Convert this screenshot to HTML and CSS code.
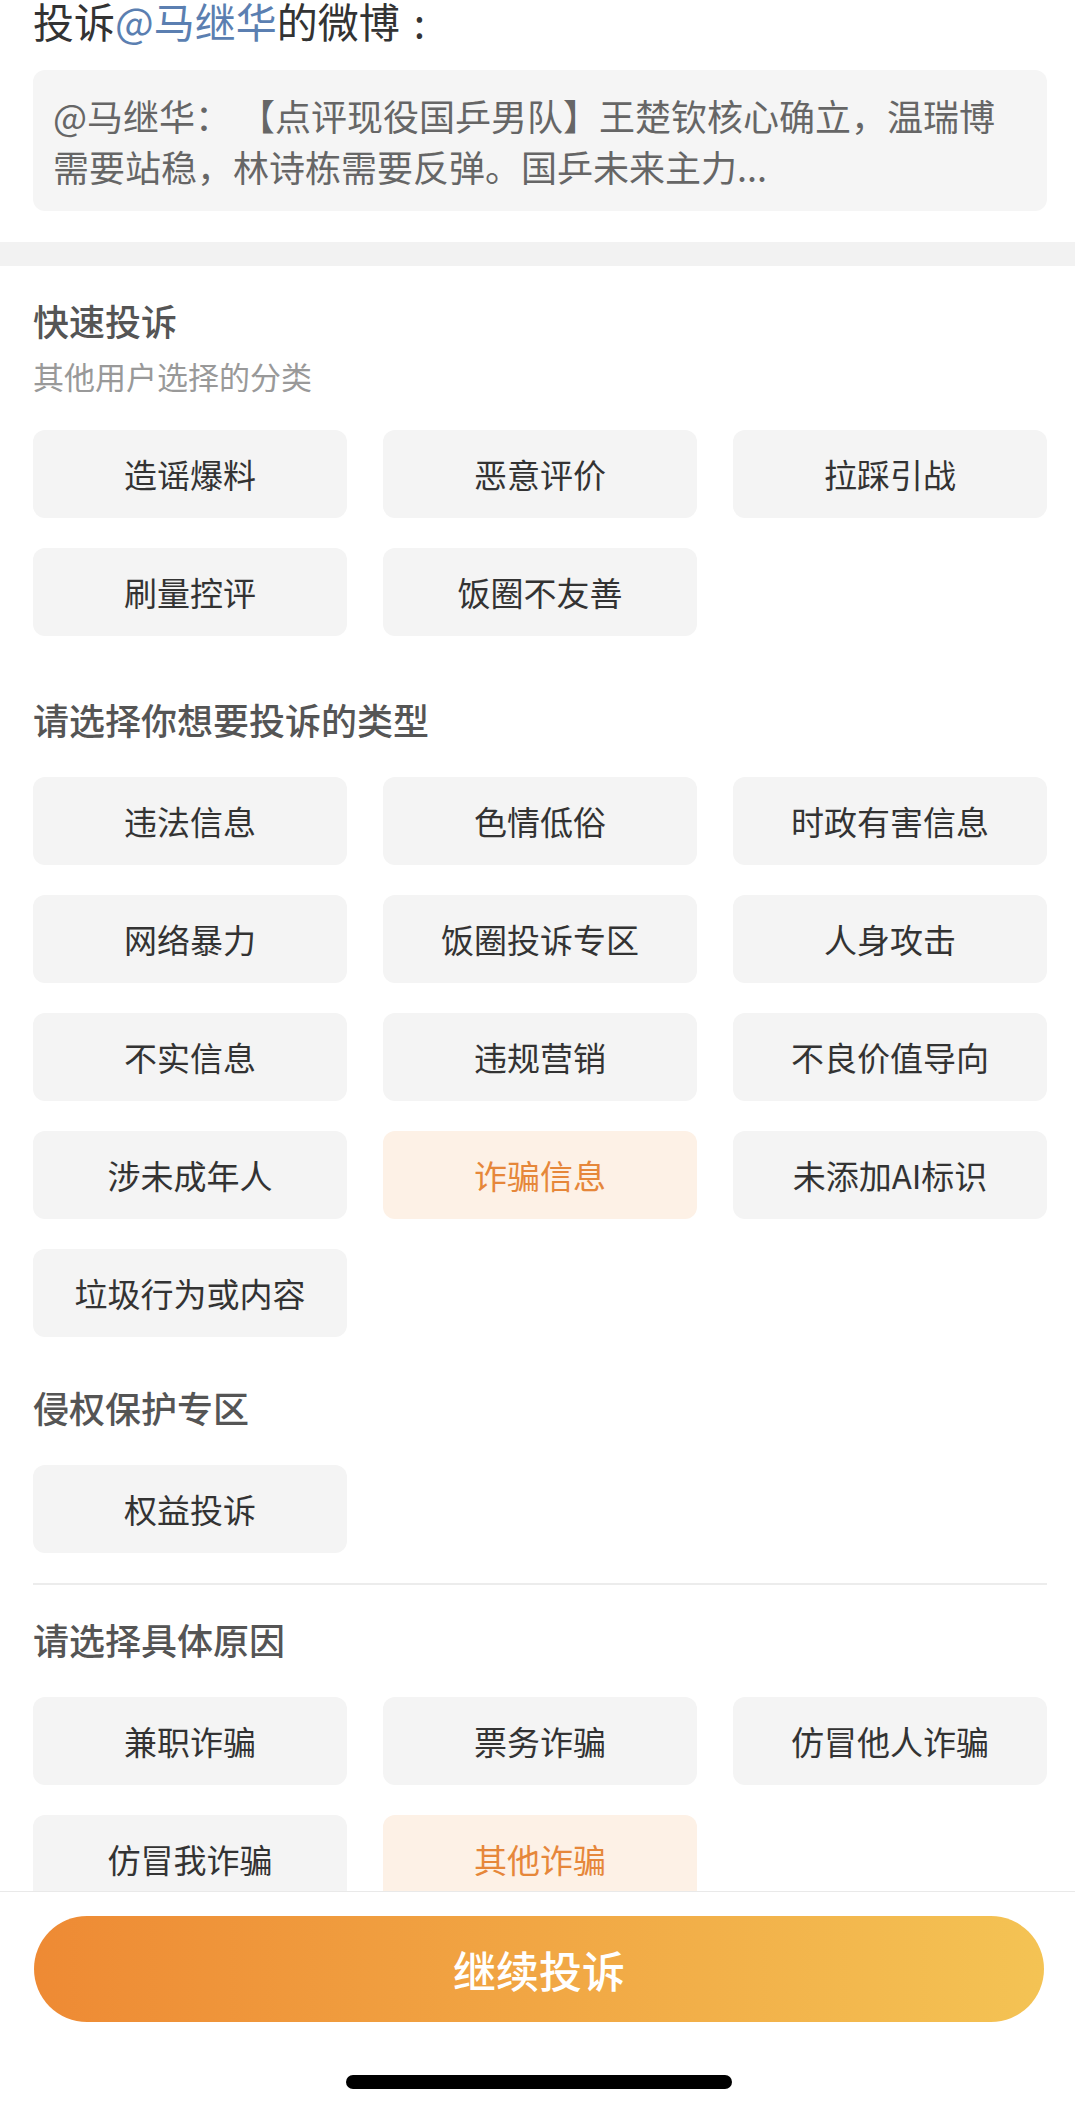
FILE: index.html
```html
<!DOCTYPE html>
<html lang="zh-CN">
  <head>
    <meta charset="UTF-8" />
    <meta name="viewport" content="width=device-width, initial-scale=1.0" />
    <title>投诉</title>
    <link rel="stylesheet" href="styles.css">
  </head>
  <body>
    <!-- Target weibo -->
    <header class="target">
      <h1 class="target-title">投诉<a href="#">@马继华</a>的微博<span class="colon">:</span></h1>
      <div class="quote">@马继华： 【点评现役国乒男队】王楚钦核心确立，温瑞博需要站稳，林诗栋需要反弹。国乒未来主力...</div>
    </header>

    <div class="band"></div>

    <main class="content">
      <!-- Quick complaint -->
      <section class="group">
        <h2 class="group-title">快速投诉</h2>
        <p class="group-sub">其他用户选择的分类</p>
        <div class="options">
          <button class="option">造谣爆料</button>
          <button class="option">恶意评价</button>
          <button class="option">拉踩引战</button>
          <button class="option">刷量控评</button>
          <button class="option">饭圈不友善</button>
        </div>
      </section>

      <!-- Complaint type -->
      <section class="group group-type">
        <h2 class="group-title">请选择你想要投诉的类型</h2>
        <div class="options">
          <button class="option">违法信息</button>
          <button class="option">色情低俗</button>
          <button class="option">时政有害信息</button>
          <button class="option">网络暴力</button>
          <button class="option">饭圈投诉专区</button>
          <button class="option">人身攻击</button>
          <button class="option">不实信息</button>
          <button class="option">违规营销</button>
          <button class="option">不良价值导向</button>
          <button class="option">涉未成年人</button>
          <button class="option active">诈骗信息</button>
          <button class="option">未添加AI标识</button>
          <button class="option">垃圾行为或内容</button>
        </div>
      </section>

      <section class="group group-rights">
        <h2 class="group-title">侵权保护专区</h2>
        <div class="options">
          <button class="option">权益投诉</button>
        </div>
      </section>

      <hr class="divider" />

      <!-- Reason -->
      <section class="group group-reason">
        <h2 class="group-title">请选择具体原因</h2>
        <div class="options">
          <button class="option">兼职诈骗</button>
          <button class="option">票务诈骗</button>
          <button class="option">仿冒他人诈骗</button>
          <button class="option">仿冒我诈骗</button>
          <button class="option active">其他诈骗</button>
        </div>
      </section>
    </main>

    <!-- Bottom bar -->
    <footer class="action-bar">
      <button class="submit-button">继续投诉</button>
      <div class="home-indicator"></div>
    </footer>
  </body>
</html>
```

FILE: styles.css
```css
body {
  margin: 0;
  background-color: #fff;
  color: #333;
  font-family: "Noto Sans CJK SC", "Noto Sans", sans-serif;
}

.target {
  padding: 0 28px 0 33px;
}

.target-title {
  margin: 0;
  font-size: 41px;
  font-weight: normal;
  line-height: 40px;
  color: #333;
}

.target-title a {
  color: #5b7fb1;
  text-decoration: none;
}

.target-title .colon {
  margin-left: 14px;
}

.quote {
  margin-top: 30px;
  padding: 20px 20px 19px;
  background-color: #f5f5f5;
  border-radius: 12px;
  font-size: 36px;
  line-height: 51px;
  color: #666;
}

.band {
  margin-top: 31px;
  height: 24px;
  background-color: #f2f2f2;
}

.content {
  padding: 0 28px 220px 33px;
}

.group {
  padding-top: 30px;
}

.group-type {
  padding-top: 59px;
}

.group-rights {
  padding-top: 46px;
}

.group-reason {
  padding-top: 30px;
}

.group-title {
  margin: 0;
  font-size: 36px;
  font-weight: 500;
  line-height: 48px;
  color: #555;
}

.group-sub {
  margin: 12px 0 0;
  font-size: 31px;
  line-height: 40px;
  color: #999;
}

.options {
  margin-top: 34px;
  display: grid;
  grid-template-columns: repeat(3, 1fr);
  column-gap: 36px;
  row-gap: 30px;
}

.option {
  height: 88px;
  padding: 0;
  border: none;
  border-radius: 12px;
  background-color: #f4f4f4;
  color: #333;
  font-family: inherit;
  font-size: 33px;
  cursor: pointer;
}

.option.active {
  background-color: #fdf1e6;
  color: #e6873a;
}

.divider {
  margin: 30px 0 0;
  border: none;
  border-top: 2px solid #ececec;
}

.action-bar {
  position: fixed;
  left: 0;
  right: 0;
  bottom: 0;
  height: 216px;
  box-sizing: border-box;
  padding: 24px 31px 0 34px;
  background-color: #fff;
  border-top: 1px solid #e9e9e9;
  display: flex;
  flex-direction: column;
  align-items: center;
}

.submit-button {
  width: 100%;
  height: 106px;
  border: none;
  border-radius: 53px;
  background: linear-gradient(90deg, #ee8a34, #f4c354);
  color: #fff;
  font-family: inherit;
  font-size: 43px;
  font-weight: 500;
  cursor: pointer;
}

.home-indicator {
  margin-top: 53px;
  width: 386px;
  height: 14px;
  border-radius: 7px;
  background-color: #000;
}
```
